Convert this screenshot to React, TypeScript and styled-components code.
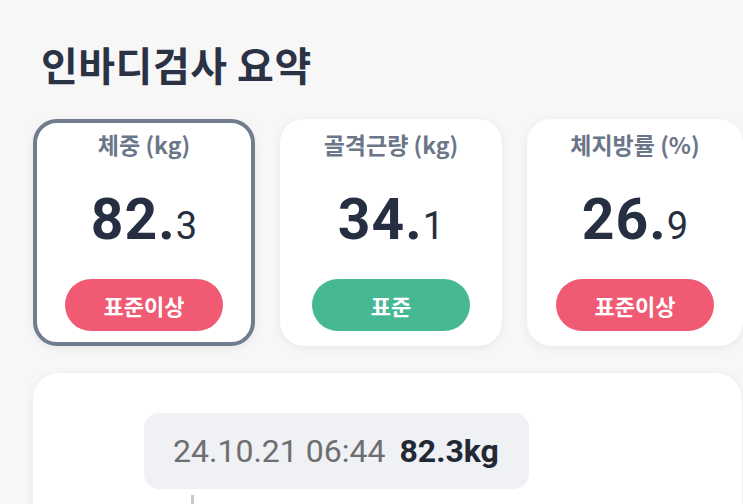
import React from "react";
import styled, { createGlobalStyle } from "styled-components";

const Global = createGlobalStyle`
  html, body { margin: 0; padding: 0; background: #f7f7f8; }
  body { width: 743px; height: 504px; overflow: hidden; font-family: "Noto Sans CJK KR", "Noto Sans", sans-serif; }
`;

const Page = styled.div`
  width: 743px;
  height: 504px;
  overflow: hidden;
  box-sizing: border-box;
  padding: 38px 0 0 33px;
  background: #f7f7f8;
`;

const Title = styled.h1`
  margin: 0 0 0 8px;
  font-family: "Noto Sans CJK KR", sans-serif;
  font-size: 40px;
  line-height: 52px;
  font-weight: 700;
  color: #2b3244;
  letter-spacing: 0.5px;
`;

const CardRow = styled.div`
  display: grid;
  grid-template-columns: 222px 222px 216px;
  gap: 25px;
  margin-top: 29px;
`;

const Card = styled.div<{ $selected?: boolean }>`
  box-sizing: border-box;
  height: 227px;
  border-radius: 24px;
  background: #ffffff;
  border: ${(p) => (p.$selected ? "4px solid #6f7d8f" : "4px solid transparent")};
  box-shadow: 0 2px 10px rgba(0, 0, 0, 0.07);
  display: flex;
  flex-direction: column;
  align-items: center;
  padding-top: 6px;
`;

const Label = styled.div`
  font-family: "Noto Sans CJK KR", sans-serif;
  font-size: 23px;
  line-height: 30px;
  font-weight: 600;
  color: #6b7688;
`;

const Value = styled.div`
  margin-top: 34px;
  display: flex;
  align-items: baseline;
  font-family: Roboto, "Liberation Sans", sans-serif;
  color: #262e42;
  line-height: 54px;
`;

const Whole = styled.span`
  font-size: 57px;
  font-weight: 700;
  letter-spacing: 1px;
`;

const Fraction = styled.span`
  font-size: 38px;
  font-weight: 400;
`;

const Badge = styled.div<{ $tone: "high" | "normal" }>`
  margin-top: 26px;
  width: 158px;
  height: 52px;
  border-radius: 26px;
  background: ${(p) => (p.$tone === "high" ? "#f05a73" : "#46b893")};
  color: #ffffff;
  display: flex;
  align-items: center;
  justify-content: center;
  font-family: "Noto Sans CJK KR", sans-serif;
  font-size: 22px;
  font-weight: 700;
`;

const ChartCard = styled.div`
  margin-top: 27px;
  width: 709px;
  height: 200px;
  box-sizing: border-box;
  background: #ffffff;
  border-radius: 26px;
  box-shadow: 0 2px 10px rgba(0, 0, 0, 0.07);
  padding: 40px 0 0 111px;
`;

const Tooltip = styled.div`
  display: inline-flex;
  align-items: center;
  gap: 14px;
  height: 76px;
  box-sizing: border-box;
  padding: 0 30px 0 29px;
  background: #f0f1f4;
  border-radius: 15px;
  font-family: Roboto, "Liberation Sans", sans-serif;
  font-size: 32px;
`;

const TipDate = styled.span`
  color: #6e6e70;
  font-weight: 400;
`;

const TipValue = styled.span`
  color: #222834;
  font-weight: 700;
`;

const Guide = styled.div`
  margin: 6px 0 0 47px;
  width: 3px;
  height: 40px;
  background: #c9c9cc;
`;

type Metric = {
  label: string;
  whole: string;
  frac: string;
  status: string;
  tone: "high" | "normal";
  selected?: boolean;
};

const metrics: Metric[] = [
  { label: "체중 (kg)", whole: "82.", frac: "3", status: "표준이상", tone: "high", selected: true },
  { label: "골격근량 (kg)", whole: "34.", frac: "1", status: "표준", tone: "normal" },
  { label: "체지방률 (%)", whole: "26.", frac: "9", status: "표준이상", tone: "high" },
];

export default function App() {
  return (
    <>
      <Global />
      <Page>
        <Title>인바디검사 요약</Title>
        <CardRow>
          {metrics.map((m) => (
            <Card key={m.label} $selected={m.selected}>
              <Label>{m.label}</Label>
              <Value>
                <Whole>{m.whole}</Whole>
                <Fraction>{m.frac}</Fraction>
              </Value>
              <Badge $tone={m.tone}>{m.status}</Badge>
            </Card>
          ))}
        </CardRow>
        <ChartCard>
          <Tooltip>
            <TipDate>24.10.21 06:44</TipDate>
            <TipValue>82.3kg</TipValue>
          </Tooltip>
          <Guide />
        </ChartCard>
      </Page>
    </>
  );
}
